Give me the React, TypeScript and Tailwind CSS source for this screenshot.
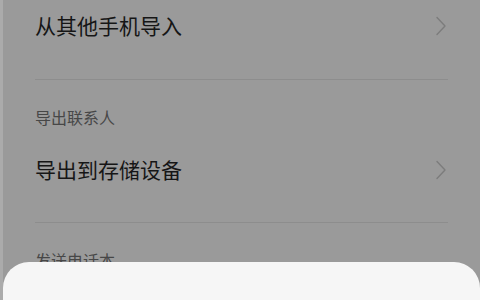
import React from 'react'

const cjk = { fontFamily: '"Noto Sans CJK SC", "Noto Sans", sans-serif' }

function Chevron() {
  return (
    <svg width="12" height="20" viewBox="0 0 12 20" fill="none" className="shrink-0">
      <path d="M2 1.5L10 10L2 18.5" stroke="#7c7c7c" strokeWidth="1.4" strokeLinecap="round" strokeLinejoin="round" />
    </svg>
  )
}

function Row({ label, className = '' }: { label: string; className?: string }) {
  return (
    <div className={`flex h-[56px] items-center justify-between pb-[5px] pr-[33px] ${className}`}>
      <span className="text-[21px] leading-none text-[#161616]">{label}</span>
      <Chevron />
    </div>
  )
}

export default function App() {
  return (
    <div className="relative h-[300px] w-[480px] overflow-hidden border-l-[3px] border-[#ababab] bg-[#9a9a9a]" style={cjk}>
      <div className="flex flex-col pl-[32px]">
        <Row label="从其他手机导入" />
        <div className="mr-[32px] mt-[23px] h-px bg-[#8d8d8d]" />
        <div className="mt-[27px] h-[20px] text-[16px] leading-[20px] text-[#474747]">导出联系人</div>
        <Row label="导出到存储设备" className="mt-[17px]" />
        <div className="mr-[32px] mt-[22px] h-px bg-[#8d8d8d]" />
        <div className="mt-[27px] h-[20px] text-[16px] leading-[20px] text-[#474747]">发送电话本</div>
      </div>

      {/* bottom sheet */}
      <div className="absolute bottom-0 left-0 right-0 top-[262px] rounded-t-[26px] bg-[#f6f6f6]" />
    </div>
  )
}
